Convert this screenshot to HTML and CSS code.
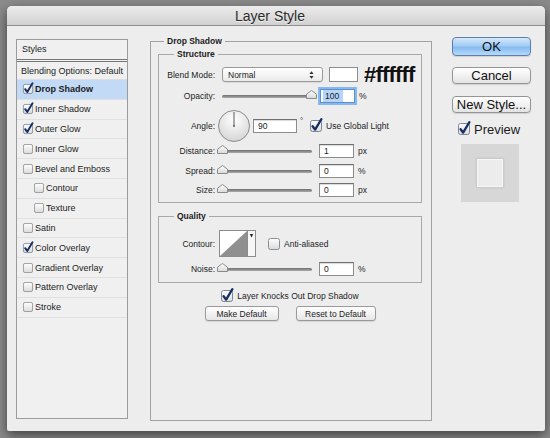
FILE: index.html
```html
<!DOCTYPE html>
<html lang="en">
<head>
    <meta charset="UTF-8">
    <title>Layer Style</title>
    <link rel="stylesheet" href="styles.css">
</head>
<body>

<svg class="defs" width="0" height="0" aria-hidden="true">
    <defs>
        <linearGradient id="boxfill" x1="0" y1="0" x2="0" y2="1">
            <stop offset="0" stop-color="#ffffff"/>
            <stop offset="1" stop-color="#dadada"/>
        </linearGradient>
        <linearGradient id="thumbfill" x1="0" y1="0" x2="0" y2="1">
            <stop offset="0" stop-color="#ffffff"/>
            <stop offset="1" stop-color="#d8d8d8"/>
        </linearGradient>
        <radialGradient id="dialfill" cx="0.5" cy="0.3" r="0.75">
            <stop offset="0" stop-color="#ffffff"/>
            <stop offset="1" stop-color="#d2d2d2"/>
        </radialGradient>
        <symbol id="cb-off" viewBox="0 0 12 12">
            <rect x="0.5" y="0.5" width="11" height="11" rx="2" fill="url(#boxfill)" stroke="#8c8c8c"/>
        </symbol>
        <symbol id="cb-on" viewBox="0 0 12 12" overflow="visible">
            <rect x="0.5" y="0.5" width="11" height="11" rx="2" fill="url(#boxfill)" stroke="#7d8796"/>
            <path d="M2.6 6.2 L5.1 9.6 L11.4 -0.8" fill="none" stroke="#172f62" stroke-width="2.3" stroke-linecap="round" stroke-linejoin="round"/>
        </symbol>
        <symbol id="thumb" viewBox="0 0 11 9">
            <path d="M0.5 8.5 V4.2 L5.5 0.5 L10.5 4.2 V8.5 Z" fill="url(#thumbfill)" stroke="#8a8a8a"/>
        </symbol>
    </defs>
</svg>

<div class="dialog">
    <div class="titlebar">Layer Style</div>

    <div class="content">

        <!-- styles list -->
        <div class="styles">
            <div class="styles-head">Styles</div>
            <div class="blend-row">Blending Options: Default</div>
            <div class="item on"><svg class="cb"><use href="#cb-on"/></svg>Drop Shadow</div>
            <div class="item"><svg class="cb"><use href="#cb-on"/></svg>Inner Shadow</div>
            <div class="item"><svg class="cb"><use href="#cb-on"/></svg>Outer Glow</div>
            <div class="item"><svg class="cb"><use href="#cb-off"/></svg>Inner Glow</div>
            <div class="item"><svg class="cb"><use href="#cb-off"/></svg>Bevel and Emboss</div>
            <div class="item sub"><svg class="cb"><use href="#cb-off"/></svg>Contour</div>
            <div class="item sub"><svg class="cb"><use href="#cb-off"/></svg>Texture</div>
            <div class="item"><svg class="cb"><use href="#cb-off"/></svg>Satin</div>
            <div class="item"><svg class="cb"><use href="#cb-on"/></svg>Color Overlay</div>
            <div class="item"><svg class="cb"><use href="#cb-off"/></svg>Gradient Overlay</div>
            <div class="item"><svg class="cb"><use href="#cb-off"/></svg>Pattern Overlay</div>
            <div class="item"><svg class="cb"><use href="#cb-off"/></svg>Stroke</div>
        </div>

        <!-- drop shadow settings -->
        <fieldset class="main">
            <legend>Drop Shadow</legend>
            <div class="main-in">

                <fieldset class="group">
                    <legend>Structure</legend>
                    <div class="group-in structure">
                        <div class="row r-blend">
                            <span class="lbl">Blend Mode:</span>
                            <div class="select">
                                <span>Normal</span>
                                <svg class="updown" width="5" height="8" viewBox="0 0 5 8">
                                    <path d="M2.5 0.3 L4.6 3 H0.4 Z M2.5 7.7 L4.6 5 H0.4 Z" fill="#333"/>
                                </svg>
                            </div>
                            <div class="swatch"></div>
                            <span class="hex">#ffffff</span>
                        </div>
                        <div class="row r-opacity">
                            <span class="lbl">Opacity:</span>
                            <div class="slider"><div class="track"></div><svg class="thumb max"><use href="#thumb"/></svg></div>
                            <div class="num focus"><span class="sel">100</span></div>
                            <span class="unit">%</span>
                        </div>
                        <div class="row r-angle">
                            <span class="lbl">Angle:</span>
                            <svg class="dial" width="32" height="32" viewBox="0 0 32 32">
                                <circle cx="16" cy="16" r="15.5" fill="url(#dialfill)" stroke="#8c8c8c"/>
                                <line x1="16" y1="16" x2="16" y2="2" stroke="#5a5a5a" stroke-width="1"/>
                                <circle cx="16" cy="16" r="1" fill="#5a5a5a"/>
                            </svg>
                            <div class="num wide">90</div>
                            <span class="deg">°</span>
                            <svg class="cb"><use href="#cb-on"/></svg>
                            <span class="cb-lbl">Use Global Light</span>
                        </div>
                        <div class="row r-distance">
                            <span class="lbl">Distance:</span>
                            <div class="slider"><div class="track"></div><svg class="thumb min"><use href="#thumb"/></svg></div>
                            <div class="num">1</div>
                            <span class="unit">px</span>
                        </div>
                        <div class="row r-spread">
                            <span class="lbl">Spread:</span>
                            <div class="slider"><div class="track"></div><svg class="thumb min"><use href="#thumb"/></svg></div>
                            <div class="num">0</div>
                            <span class="unit">%</span>
                        </div>
                        <div class="row r-size">
                            <span class="lbl">Size:</span>
                            <div class="slider"><div class="track"></div><svg class="thumb min"><use href="#thumb"/></svg></div>
                            <div class="num">0</div>
                            <span class="unit">px</span>
                        </div>
                    </div>
                </fieldset>

                <fieldset class="group quality">
                    <legend>Quality</legend>
                    <div class="group-in">
                        <div class="row r-contour">
                            <span class="lbl">Contour:</span>
                            <svg class="contour" width="37" height="27" viewBox="0 0 37 27">
                                <rect x="0.5" y="0.5" width="28" height="26" fill="#fff" stroke="#8c8c8c"/>
                                <path d="M1 26 L28 1 V26 Z" fill="#8f8f8f"/>
                                <rect x="28.5" y="0.5" width="8" height="26" fill="#f6f6f6" stroke="#8c8c8c"/>
                                <path d="M30.8 4 H34.2 L32.5 7.5 Z" fill="#222"/>
                            </svg>
                            <svg class="cb aa"><use href="#cb-off"/></svg>
                            <span class="cb-lbl">Anti-aliased</span>
                        </div>
                        <div class="row r-noise">
                            <span class="lbl">Noise:</span>
                            <div class="slider"><div class="track"></div><svg class="thumb min"><use href="#thumb"/></svg></div>
                            <div class="num">0</div>
                            <span class="unit">%</span>
                        </div>
                    </div>
                </fieldset>

                <div class="knock">
                    <svg class="cb"><use href="#cb-on"/></svg>
                    <span class="cb-lbl">Layer Knocks Out Drop Shadow</span>
                </div>

                <div class="defaults">
                    <button type="button" class="btn-sm make">Make Default</button>
                    <button type="button" class="btn-sm reset">Reset to Default</button>
                </div>
            </div>
        </fieldset>

        <!-- buttons and preview -->
        <div class="side">
            <button type="button" class="btn ok">OK</button>
            <button type="button" class="btn">Cancel</button>
            <button type="button" class="btn">New Style...</button>
            <div class="preview-row">
                <svg class="cb big"><use href="#cb-on"/></svg>
                <span>Preview</span>
            </div>
            <div class="preview">
                <div class="preview-box"></div>
            </div>
        </div>

    </div>
</div>

</body>
</html>
```

FILE: styles.css
```css
body {
    margin: 0;
    padding: 6px 0 0 7px;
    width: 550px;
    height: 438px;
    box-sizing: border-box;
    overflow: hidden;
    background: #8b8b8b;
    font-family: 'Liberation Sans', Arial, sans-serif;
    color: #1c1c1c;
}

.defs {
    position: absolute;
    width: 0;
    height: 0;
}

.dialog {
    width: 538px;
    height: 425px;
    background: #ededed;
    border-radius: 5px 5px 2px 2px;
    box-shadow: 0 4px 12px rgba(0, 0, 0, 0.55);
    overflow: hidden;
}

.titlebar {
    height: 19px;
    border-bottom: 1px solid #8f8f8f;
    background: linear-gradient(#ececec, #d1d1d1);
    padding-right: 12px;
    text-align: center;
    font-size: 14px;
    line-height: 20px;
    color: #2a2a2a;
    text-shadow: 0 1px 0 rgba(255, 255, 255, 0.6);
}

.content {
    display: flex;
    align-items: flex-start;
    height: 405px;
}

svg.cb {
    width: 12px;
    height: 12px;
    flex: none;
    overflow: visible;
}

/* left list */

.styles {
    margin: 13px 0 0 9px;
    width: 112px;
    height: 380px;
    box-sizing: border-box;
    border: 1px solid #9b9b9b;
    background: #f0f0f0;
    font-size: 9px;
}

.styles-head {
    height: 19px;
    line-height: 19px;
    padding-left: 5px;
    border-bottom: 3px double #777;
}

.blend-row {
    height: 18px;
    line-height: 18px;
    padding-left: 4px;
    box-sizing: border-box;
    border-bottom: 1px solid #dedede;
}

.item {
    display: flex;
    align-items: center;
    height: 19.8px;
    padding-left: 6px;
    box-sizing: border-box;
    border-bottom: 1px solid #e0e0e0;
}

.item svg.cb {
    width: 10px;
    height: 10px;
    margin-right: 2px;
}

.item.sub {
    padding-left: 17px;
}

.item.on {
    background: #c2daf6;
    font-weight: bold;
}

/* middle panel */

fieldset {
    margin: 0;
    padding: 0;
    min-width: 0;
}

legend {
    padding: 0 3px;
    font-size: 8.5px;
    font-weight: bold;
    line-height: 11px;
}

.main {
    margin: 10px 0 0 22px;
    width: 282px;
    height: 385px;
    box-sizing: border-box;
    border: 1px solid #a2a2a2;
}

.main > legend {
    margin-left: 13px;
}

.main-in {
    padding: 2px 9px 0 7px;
}

.group {
    border: 1px solid #a8a8a8;
}

.group > legend {
    margin-left: 15px;
}

.group-in {
    padding: 7px 0 5px 0;
}

.quality {
    margin-top: 8px;
}

.quality .group-in {
    padding: 8px 0 6px 0;
}

.row {
    display: flex;
    align-items: center;
    height: 14px;
    font-size: 8.5px;
}

.lbl {
    width: 56px;
    margin-right: 7px;
    text-align: right;
    flex: none;
}

.r-blend { height: 15px; }
.r-opacity { margin-top: 7px; }
.r-angle { margin-top: 7px; height: 32px; }
.r-distance { margin-top: 2px; }
.r-spread { margin-top: 6px; }
.r-size { margin-top: 5px; }
.r-contour { height: 27px; }
.r-noise { margin-top: 5px; }

.select {
    width: 101px;
    height: 15px;
    box-sizing: border-box;
    border: 1px solid #9a9a9a;
    border-radius: 3px;
    background: linear-gradient(#ffffff, #ebebeb);
    display: flex;
    align-items: center;
    justify-content: space-between;
    padding: 0 8px 0 5px;
    box-shadow: 0 1px 1px rgba(0, 0, 0, 0.08);
}

.swatch {
    width: 29px;
    height: 15px;
    box-sizing: border-box;
    margin-left: 6px;
    border: 1px solid #8c8c8c;
    background: #fff;
}

.hex {
    margin-left: 6px;
    font-size: 22px;
    font-weight: bold;
    letter-spacing: -0.8px;
    color: #111;
}

.slider {
    position: relative;
    width: 90px;
    height: 14px;
    flex: none;
}

.track {
    margin-top: 6px;
    height: 3px;
    border-radius: 2px;
    background: linear-gradient(#6e6e6e, #aaa);
}

.thumb {
    position: absolute;
    top: 1px;
    width: 11px;
    height: 9px;
}

.thumb.max { left: 84px; }
.thumb.min { left: -5px; }

.num {
    width: 35px;
    height: 14px;
    box-sizing: border-box;
    margin-left: 7px;
    padding-left: 4px;
    border: 1px solid #8c8c8c;
    border-top-color: #6f6f6f;
    background: #fff;
    box-shadow: inset 0 1px 1px rgba(0, 0, 0, 0.15);
    line-height: 12px;
    flex: none;
}

.num.focus {
    margin-left: 8px;
    border-color: #5e8fcf;
    box-shadow: 0 0 0 2px #86b8ec;
    padding-left: 2px;
}

.sel {
    display: inline-block;
    padding: 0 4px 0 2px;
    background: #b4d4f8;
}

.num.wide {
    width: 44px;
    margin-left: 3px;
}

.unit {
    margin-left: 4px;
}

.dial {
    margin-left: -4px;
    flex: none;
}

.deg {
    width: 10px;
    padding-left: 3px;
    box-sizing: border-box;
    align-self: flex-start;
    margin-top: 6px;
    font-size: 8px;
}

.cb-lbl {
    margin-left: 4px;
}

.r-angle svg.cb {
    margin-left: 3px;
}

.contour {
    margin-left: -3px;
    flex: none;
}

svg.cb.aa {
    margin-left: 12px;
}

.knock {
    display: flex;
    justify-content: center;
    align-items: center;
    height: 12px;
    margin-top: 7px;
    font-size: 8.5px;
}

.defaults {
    display: flex;
    justify-content: center;
    gap: 17px;
    margin-top: 4px;
}

.btn-sm {
    height: 15px;
    padding: 0;
    border: 1px solid #9a9a9a;
    border-radius: 3px;
    background: linear-gradient(#ffffff, #e6e6e6);
    box-shadow: 0 1px 1px rgba(0, 0, 0, 0.1);
    font-family: inherit;
    font-size: 8.5px;
    color: #1c1c1c;
}

.btn-sm.make { width: 74px; }
.btn-sm.reset { width: 80px; }

/* right column */

.side {
    margin: 11px 0 0 20px;
    width: 79px;
    display: flex;
    flex-direction: column;
}

.btn {
    width: 79px;
    height: 17px;
    padding: 0;
    margin-top: 12px;
    border: 1px solid #959595;
    border-radius: 4px;
    background: linear-gradient(#ffffff, #e4e4e4);
    box-shadow: 0 1px 1px rgba(0, 0, 0, 0.12);
    font-family: inherit;
    font-size: 13px;
    line-height: 15px;
    color: #111;
}

.btn.ok {
    height: 19px;
    margin-top: 0;
    border-color: #5d7fa6;
    background: linear-gradient(#d5e8fc 0%, #a3ccf4 45%, #86bcf0 55%, #b4dafc 100%);
    line-height: 17px;
}

.btn.ok + .btn {
    margin-top: 11px;
}

.preview-row {
    display: flex;
    align-items: center;
    height: 12px;
    margin: 10px 0 0 6px;
    font-size: 13px;
}

.preview-row span {
    margin-left: 4px;
}

.preview {
    width: 58px;
    height: 58px;
    margin: 9px 0 0 9px;
    background: #d7d7d7;
    display: flex;
    align-items: center;
    justify-content: center;
}

.preview-box {
    width: 26px;
    height: 28px;
    box-sizing: border-box;
    border: 1px solid #f7f7f7;
    background: #ececec;
    box-shadow: 0 0 0 1px #cbcbcb, 0 0 3px rgba(0, 0, 0, 0.15);
}
```
